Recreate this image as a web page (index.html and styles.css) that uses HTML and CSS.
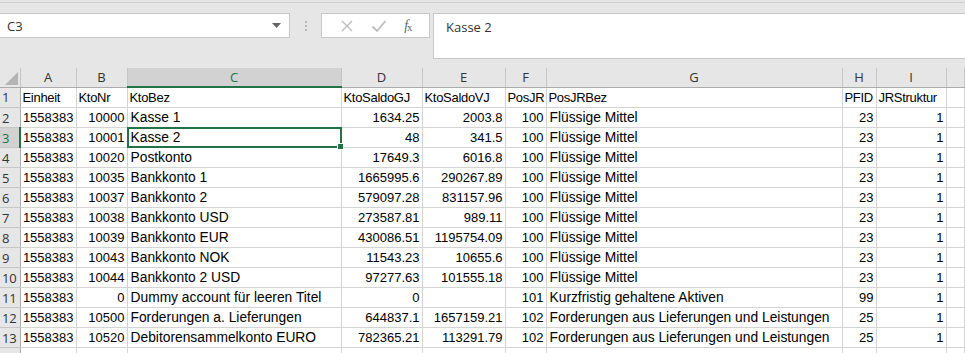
FILE: index.html
```html
<!DOCTYPE html>
<html lang="de">
<head>
    <meta charset="UTF-8">
    <title>Kontenplan</title>
    <link rel="stylesheet" href="styles.css">
</head>
<body>

    <!-- Formula bar -->
    <div class="formula-bar">
        <div class="name-box">
            <span>C3</span>
            <svg class="drop" width="9" height="5" viewBox="0 0 9 5"><path d="M0 0h9L4.5 5z" fill="#666"/></svg>
        </div>
        <div class="grip">
            <i></i><i></i><i></i>
        </div>
        <div class="fx-buttons">
            <svg width="14" height="14" viewBox="0 0 14 14"><path d="M2 2L12 12M12 2L2 12" stroke="#bdbdbd" stroke-width="1.4" fill="none"/></svg>
            <svg width="16" height="14" viewBox="0 0 16 14"><path d="M1.5 7.5L6 12L14.5 2" stroke="#bdbdbd" stroke-width="1.8" fill="none"/></svg>
            <span class="fx"><i>f</i><sub>x</sub></span>
        </div>
        <div class="formula-input">Kasse 2</div>
    </div>

    <!-- Sheet grid -->
    <table class="sheet">
        <colgroup>
            <col style="width:20px"><col style="width:56px"><col style="width:51px"><col style="width:214px">
            <col style="width:81px"><col style="width:83px"><col style="width:41px"><col style="width:296px">
            <col style="width:34px"><col style="width:70px"><col>
        </colgroup>
        <thead>
            <tr>
                <th class="corner"><span></span></th>
                <th>A</th><th>B</th><th class="sel">C</th><th>D</th><th>E</th><th>F</th><th>G</th><th>H</th><th>I</th><th></th>
            </tr>
        </thead>
        <tbody id="rows"></tbody>
    </table>

    <script>
        // Sheet data: Einheit, KtoNr, KtoBez, KtoSaldoGJ, KtoSaldoVJ, PosJR, PosJRBez, PFID, JRStruktur
        const data = [
            ["Einheit", "KtoNr", "KtoBez", "KtoSaldoGJ", "KtoSaldoVJ", "PosJR", "PosJRBez", "PFID", "JRStruktur"],
            [1558383, 10000, "Kasse 1", 1634.25, 2003.8, 100, "Flüssige Mittel", 23, 1],
            [1558383, 10001, "Kasse 2", 48, 341.5, 100, "Flüssige Mittel", 23, 1],
            [1558383, 10020, "Postkonto", 17649.3, 6016.8, 100, "Flüssige Mittel", 23, 1],
            [1558383, 10035, "Bankkonto 1", 1665995.6, 290267.89, 100, "Flüssige Mittel", 23, 1],
            [1558383, 10037, "Bankkonto 2", 579097.28, 831157.96, 100, "Flüssige Mittel", 23, 1],
            [1558383, 10038, "Bankkonto USD", 273587.81, 989.11, 100, "Flüssige Mittel", 23, 1],
            [1558383, 10039, "Bankkonto EUR", 430086.51, 1195754.09, 100, "Flüssige Mittel", 23, 1],
            [1558383, 10043, "Bankkonto NOK", 11543.23, 10655.6, 100, "Flüssige Mittel", 23, 1],
            [1558383, 10044, "Bankkonto 2 USD", 97277.63, 101555.18, 100, "Flüssige Mittel", 23, 1],
            [1558383, 0, "Dummy account für leeren Titel", 0, "", 101, "Kurzfristig gehaltene Aktiven", 99, 1],
            [1558383, 10500, "Forderungen a. Lieferungen", 644837.1, 1657159.21, 102, "Forderungen aus Lieferungen und Leistungen", 25, 1],
            [1558383, 10520, "Debitorensammelkonto EURO", 782365.21, 113291.79, 102, "Forderungen aus Lieferungen und Leistungen", 25, 1],
            ["", "", "", "", "", "", "", "", ""]
        ];

        const body = document.getElementById("rows");
        data.forEach(function(row, i) {
            const tr = document.createElement("tr");
            if (i === 0) tr.className = "titles";
            const head = document.createElement("th");
            if (i < data.length - 1) head.textContent = i + 1;
            if (i === 2) head.className = "sel";
            tr.appendChild(head);
            row.forEach(function(value, j) {
                const td = document.createElement("td");
                td.textContent = value;
                if (typeof value === "number") td.className = "num";
                if (i === 2 && j === 2) td.className = "active";
                tr.appendChild(td);
            });
            tr.appendChild(document.createElement("td"));
            body.appendChild(tr);
        });
    </script>

</body>
</html>
```

FILE: styles.css
```css
/* Global */
body {
    margin: 0;
    background-color: #e6e6e6;
    font-family: "Liberation Sans", Arial, sans-serif;
    overflow: hidden;
}

/* Formula bar */
.formula-bar {
    display: flex;
    align-items: flex-start;
    border-top: 1px solid #d0d0d0;
    margin-top: 2px;
    padding-top: 10px;
    height: 66px;
    box-sizing: border-box;
}

.name-box {
    width: 290px;
    height: 25px;
    box-sizing: border-box;
    background-color: #fff;
    border: 1px solid #c6c6c6;
    border-left: none;
    display: flex;
    align-items: center;
    justify-content: space-between;
    padding: 0 8px 0 7px;
    font-family: "Open Sans", sans-serif;
    font-size: 13px;
    color: #333;
}

.grip {
    width: 31px;
    height: 25px;
    display: flex;
    flex-direction: column;
    align-items: center;
    justify-content: center;
    gap: 2px;
}

.grip i {
    width: 2px;
    height: 2px;
    background-color: #b8b8b8;
}

.fx-buttons {
    width: 109px;
    height: 25px;
    box-sizing: border-box;
    background-color: #fff;
    border: 1px solid #c6c6c6;
    display: flex;
    align-items: center;
    justify-content: space-around;
    padding: 0 8px 0 10px;
}

.fx {
    font-family: "Liberation Serif", serif;
    font-size: 14px;
    color: #666;
}

.fx sub {
    font-size: 11px;
    vertical-align: -1px;
    margin-left: -1px;
}

.formula-input {
    flex: 1;
    margin-left: 3px;
    height: 46px;
    box-sizing: border-box;
    background-color: #fff;
    border: 1px solid #c6c6c6;
    border-right: none;
    padding: 4px 0 0 12px;
    font-family: "Open Sans", sans-serif;
    font-size: 13px;
    color: #333;
}

/* Grid */
.sheet {
    border-collapse: collapse;
    table-layout: fixed;
    width: 965px;
    font-size: 13.8px;
    color: #000;
}

.sheet th {
    background-color: #e6e6e6;
    font-weight: normal;
    color: #333;
    font-family: "Open Sans", sans-serif;
    font-size: 13px;
    padding: 0;
}

.sheet thead th {
    height: 18px;
    border-right: 1px solid #c6c6c6;
    border-bottom: 1px solid #ababab;
    text-align: center;
    line-height: 18px;
}

.sheet thead th.sel {
    background-color: #d2d2d2;
    color: #217346;
    border-bottom: 2px solid #217346;
}

.sheet thead .corner {
    position: relative;
}

.corner span {
    position: absolute;
    right: 2px;
    bottom: 2px;
    width: 0;
    height: 0;
    border-left: 13px solid transparent;
    border-bottom: 13px solid #b4b4b4;
}

.sheet tbody th {
    height: 19px;
    border-right: 1px solid #ababab;
    border-bottom: 1px solid #c6c6c6;
    text-align: left;
    padding-left: 2px;
    font-size: 13px;
    letter-spacing: -0.3px;
}

.sheet tbody th.sel {
    background-color: #d2d2d2;
    color: #217346;
    border-right: 2px solid #217346;
}

.sheet td {
    height: 19px;
    background-color: #fff;
    border-right: 1px solid #d4d4d4;
    border-bottom: 1px solid #d4d4d4;
    padding: 0 2px 0 3px;
    white-space: nowrap;
    overflow: hidden;
    line-height: 19px;
    vertical-align: bottom;
}

/* Column titles in row 1 are squeezed like Excel's narrow font */
.sheet .titles td {
    font-size: 13px;
    letter-spacing: -0.3px;
    padding-left: 2px;
}

.sheet td.num {
    text-align: right;
    padding: 0 2px 0 0;
    font-size: 13px;
}

/* Active cell */
.sheet td.active {
    position: relative;
    overflow: visible;
}

.sheet td.active::after {
    content: "";
    position: absolute;
    left: -1px;
    top: -1px;
    right: -1px;
    bottom: -1px;
    border: 2px solid #217346;
}

.sheet td.active::before {
    content: "";
    position: absolute;
    right: -3px;
    bottom: -3px;
    width: 5px;
    height: 5px;
    background-color: #217346;
    border: 1px solid #fff;
    z-index: 1;
}
```
